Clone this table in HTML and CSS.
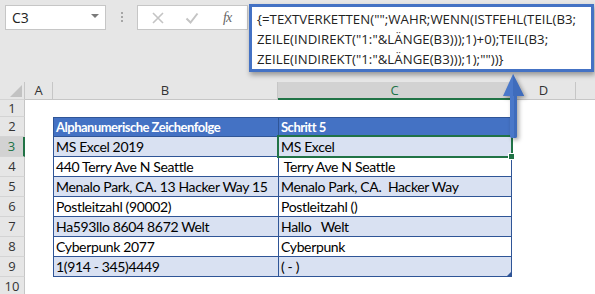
FILE: index.html
```
<!DOCTYPE html>
<html lang="de">
<head>
  <meta charset="UTF-8">
  <meta name="viewport" content="width=device-width, initial-scale=1.0">
  <title>TEXTVERKETTEN – Zahlen entfernen</title>
  <link rel="stylesheet" href="styles.css">
</head>
<body>
  <div class="formula-row">
    <div class="name-box">
      <span>C3</span>
      <span class="drop"></span>
    </div>
    <div class="grip"><span></span><span></span><span></span></div>
    <div class="fx-box">
      <svg class="ico" width="14" height="14" viewBox="0 0 14 14">
        <path d="M2 2 L12 12 M12 2 L2 12" stroke="#c4c4c4" stroke-width="1.6" fill="none"/>
      </svg>
      <svg class="ico" width="14" height="14" viewBox="0 0 14 14">
        <path d="M1.5 7.5 L5.5 11.5 L12.5 2.5" stroke="#c4c4c4" stroke-width="2" fill="none"/>
      </svg>
      <span class="fx">fx</span>
    </div>
    <div class="formula">
      <div>{=TEXTVERKETTEN("";WAHR;WENN(ISTFEHL(TEIL(B3;</div>
      <div>ZEILE(INDIREKT("1:"&amp;LÄNGE(B3)));1)+0);TEIL(B3;</div>
      <div>ZEILE(INDIREKT("1:"&amp;LÄNGE(B3)));1);""))}</div>
    </div>
  </div>

  <div class="sheet">
    <div class="row heads">
      <div class="rh corner"><span class="tri"></span></div>
      <div class="ch ca">A</div>
      <div class="ch cb">B</div>
      <div class="ch cc sel">C</div>
      <div class="ch cd">D</div>
      <div class="ch ce"></div>
    </div>
    <div class="row r1">
      <div class="rh">1</div>
      <div class="ca"></div><div class="cb"></div><div class="cc"></div><div class="cd"></div><div class="ce"></div>
    </div>
    <div class="row th">
      <div class="rh">2</div>
      <div class="ca"></div>
      <div class="cb t">Alphanumerische Zeichenfolge</div>
      <div class="cc t">Schritt 5</div>
      <div class="cd"></div><div class="ce"></div>
    </div>
    <div class="row band">
      <div class="rh sel">3</div>
      <div class="ca"></div>
      <div class="cb t">MS Excel 2019</div>
      <div class="cc t active">MS Excel</div>
      <div class="cd"></div><div class="ce"></div>
    </div>
    <div class="row">
      <div class="rh">4</div>
      <div class="ca"></div>
      <div class="cb t">440 Terry Ave N Seattle</div>
      <div class="cc t"> Terry Ave N Seattle</div>
      <div class="cd"></div><div class="ce"></div>
    </div>
    <div class="row band">
      <div class="rh">5</div>
      <div class="ca"></div>
      <div class="cb t">Menalo Park, CA. 13 Hacker Way 15</div>
      <div class="cc t">Menalo Park, CA.  Hacker Way </div>
      <div class="cd"></div><div class="ce"></div>
    </div>
    <div class="row">
      <div class="rh">6</div>
      <div class="ca"></div>
      <div class="cb t">Postleitzahl (90002)</div>
      <div class="cc t">Postleitzahl ()</div>
      <div class="cd"></div><div class="ce"></div>
    </div>
    <div class="row band">
      <div class="rh">7</div>
      <div class="ca"></div>
      <div class="cb t">Ha593llo 8604 8672 Welt</div>
      <div class="cc t">Hallo   Welt</div>
      <div class="cd"></div><div class="ce"></div>
    </div>
    <div class="row">
      <div class="rh">8</div>
      <div class="ca"></div>
      <div class="cb t">Cyberpunk 2077</div>
      <div class="cc t">Cyberpunk </div>
      <div class="cd"></div><div class="ce"></div>
    </div>
    <div class="row band">
      <div class="rh">9</div>
      <div class="ca"></div>
      <div class="cb t">1(914 - 345)4449</div>
      <div class="cc t last">( - )</div>
      <div class="cd"></div><div class="ce"></div>
    </div>
    <div class="row">
      <div class="rh">10</div>
      <div class="ca"></div><div class="cb"></div><div class="cc"></div><div class="cd"></div><div class="ce"></div>
    </div>
  </div>

  <!-- callout arrow from the cell up to the formula -->
  <svg class="arrow" width="40" height="80" viewBox="0 0 40 80">
    <path d="M13 4 L24 26 L17 26 L17 66 Q17 68 15 68 L12 68 Q10 68 10 66 L10 26 L3 26 Z" fill="#4a78c9"/>
    <path d="M13 4 L24 26 L17 26 L17 66 Q17 68 15 68 L14 68 L14 26 L13 26 Z" fill="#3f6cbc"/>
  </svg>
</body>
</html>
```

FILE: styles.css
```
* {
  box-sizing: border-box;
}

body {
  margin: 0;
  width: 595px;
  height: 294px;
  overflow: hidden;
  background: #fff;
  position: relative;
  font-family: "Open Sans", "Noto Sans", sans-serif;
}

/* formula bar */

.formula-row {
  height: 82px;
  background: #e6e6e6;
  display: flex;
  align-items: flex-start;
  padding: 4px 0 0 5px;
}

.name-box {
  width: 101px;
  height: 25px;
  margin-top: 1px;
  background: #fff;
  border: 1px solid #c6c6c6;
  display: flex;
  align-items: center;
  justify-content: space-between;
  padding: 0 6px 0 6px;
  font-size: 14px;
  color: #222;
}

.drop {
  width: 0;
  height: 0;
  border-left: 4px solid transparent;
  border-right: 4px solid transparent;
  border-top: 4px solid #7a7a7a;
  margin-top: -4px;
}

.grip {
  width: 31px;
  height: 25px;
  margin-top: 1px;
  display: flex;
  flex-direction: column;
  align-items: center;
  justify-content: center;
  gap: 2px;
  padding-bottom: 2px;
}

.grip span {
  width: 2px;
  height: 2px;
  background: #a6a6a6;
}

.fx-box {
  width: 111px;
  height: 25px;
  margin-top: 1px;
  background: #fff;
  border: 1px solid #c6c6c6;
  display: flex;
  align-items: center;
  padding: 0 0 0 13px;
}

.ico {
  margin-right: 20px;
}

.fx {
  font-family: "Liberation Serif", serif;
  font-style: italic;
  font-size: 14px;
  color: #666;
  margin-left: 4px;
  letter-spacing: -1px;
}

.formula {
  width: 345px;
  height: 68px;
  margin-left: 1px;
  background: #fff;
  border: 3px solid #4472c4;
  box-shadow: 1px 3px 5px rgba(0, 0, 0, 0.35);
  padding: 2px 0 0 5px;
  font-size: 13.2px;
  letter-spacing: 0.05px;
  line-height: 20px;
  color: #222;
  white-space: nowrap;
  position: relative;
  z-index: 1;
}

/* worksheet */

.row {
  display: flex;
  height: 20px;
  font-size: 15px;
}

.rh { width: 25px; }
.ca { width: 28px; }
.cb { width: 225px; }
.cc { width: 234px; }
.cd { width: 64px; }
.ce { flex: 1; }

.heads {
  height: 18px;
  background: #e6e6e6;
}

.ch {
  border-right: 1px solid #c6c6c6;
  border-bottom: 1px solid #c6c6c6;
  text-align: center;
  font-size: 13px;
  line-height: 17px;
  color: #333;
}

.ch.ce {
  border-right: none;
}

.ch.sel {
  background: #d2d2d2;
  color: #217346;
  border-bottom: 2px solid #217346;
}

.corner {
  position: relative;
  background: #e6e6e6;
  border-right: 1px solid #c6c6c6;
  border-bottom: 1px solid #c6c6c6;
}

.tri {
  position: absolute;
  right: 2px;
  bottom: 2px;
  width: 0;
  height: 0;
  border-left: 12px solid transparent;
  border-bottom: 12px solid #c2c2c2;
}

.r1 {
  height: 17px;
}

.rh {
  background: #e6e6e6;
  border-right: 1px solid #c6c6c6;
  border-bottom: 1px solid #d4d4d4;
  text-align: center;
  font-size: 13px;
  line-height: 19px;
  color: #333;
}

.r1 .rh {
  line-height: 16px;
}

.rh.sel {
  background: #d2d2d2;
  color: #217346;
  border-right: 2px solid #217346;
}

/* table */

.t {
  font-family: Lato, "Open Sans", sans-serif;
  font-size: 14px;
  letter-spacing: -0.35px;
  border-left: 1px solid #2f5597;
  border-bottom: 1px solid #2f5597;
  padding-left: 2px;
  line-height: 20px;
  color: #000;
  white-space: pre;
  overflow: hidden;
}

.cc.t {
  border-right: 1px solid #2f5597;
}

.th .t {
  border-top: 1px solid #2f5597;
  background: #4472c4;
  color: #fff;
  font-weight: bold;
  font-size: 13px;
  line-height: 18px;
  letter-spacing: -0.5px;
}

.band .t {
  background: #d9e1f2;
}

.active {
  position: relative;
  overflow: visible;
}

.active::after {
  content: "";
  position: absolute;
  left: -2px;
  top: -2px;
  right: -2px;
  bottom: -2px;
  border: 2px solid #217346;
}

.active::before {
  content: "";
  position: absolute;
  right: -4px;
  bottom: -4px;
  width: 5px;
  height: 5px;
  background: #217346;
  border: 1px solid #fff;
  z-index: 1;
}

.last {
  position: relative;
}

.last::after {
  content: "";
  position: absolute;
  right: 0;
  bottom: 0;
  width: 0;
  height: 0;
  border-left: 4px solid transparent;
  border-bottom: 4px solid #2f5597;
}

.arrow {
  position: absolute;
  left: 500px;
  top: 70px;
  filter: drop-shadow(2px 2px 2px rgba(0, 0, 0, 0.35));
  z-index: 2;
}
```
